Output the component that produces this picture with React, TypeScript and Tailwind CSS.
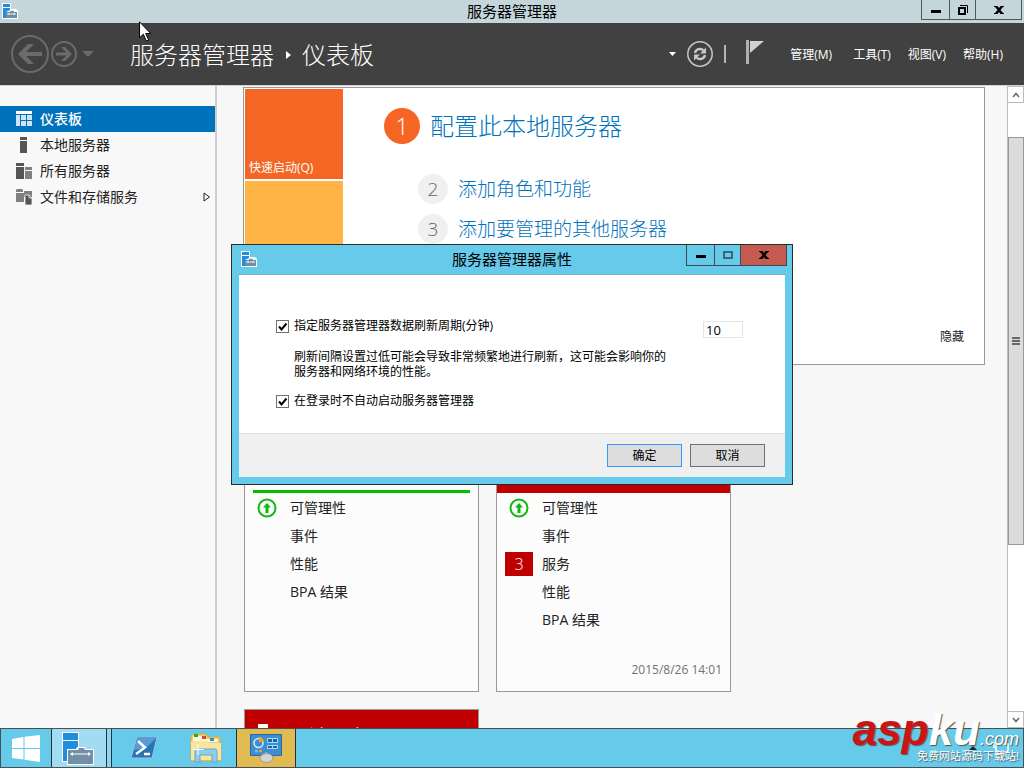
// src/App.tsx
import React, { useState } from "react";

interface NavItem {
  label: string;
  icon: React.ReactNode;
  expandable?: boolean;
}

interface TileRow {
  label: string;
  status?: "ok";
  count?: number;
}

const ServerManagerIcon: React.FC = () => (
  <svg viewBox="0 0 16 16" className="w-4 h-4">
    <path d="M0 0h9v6h5l2 2v8H0z" fill="#fff" />
    <path d="M1 1h7v3H1zM1 5h7v2L4 9v6H1z" fill="#1f8ede" />
    <path d="M4 9h3.500l1-2h3l1 2H15v6H4z" fill="#6f8ea3" />
    <path d="M7.500 9l1-1.500h3l1 1.500M5 11h9M7 10v2M12 10v2" fill="none" stroke="#fff" strokeWidth="0.8" />
  </svg>
);

const navItems: NavItem[] = [
  {
    label: "仪表板",
    icon: (
      <svg viewBox="0 0 16 16" className="w-4 h-4">
        <path d="M0 0h16v3H0z" fill="#fff" />
        <path d="M0 4h4v11H0zM5 4h5v5H5zM11 4h5v5h-5zM5 10h5v5H5zM11 10h5v5h-5z" fill="#cfe4f5" />
      </svg>
    ),
  },
  {
    label: "本地服务器",
    icon: (
      <svg viewBox="0 0 16 16" className="w-4 h-4">
        <path d="M4 0h7v3H4zM4 4h7v12H4z" fill="#555" />
      </svg>
    ),
  },
  {
    label: "所有服务器",
    icon: (
      <svg viewBox="0 0 16 16" className="w-4 h-4">
        <path d="M0 0h8v3H0zM0 4h8v12H0z" fill="#555" />
        <path d="M9 4h7v3H9zM9 8h7v8H9z" fill="#808080" />
      </svg>
    ),
  },
  {
    label: "文件和存储服务",
    expandable: true,
    icon: (
      <svg viewBox="0 0 16 16" className="w-4 h-4">
        <path d="M0 1l1-1h5l1 1v2H0zM0 4h8v9H0zM8 2h8v6H8z" fill="#808080" />
        <path d="M9 6h4l3 3v7H9z" fill="#555" stroke="#f7f7f7" strokeWidth="0.8" />
        <path d="M13 6v3h3" fill="none" stroke="#f7f7f7" strokeWidth="0.8" />
      </svg>
    ),
  },
];

const leftRows: TileRow[] = [
  { label: "可管理性", status: "ok" },
  { label: "事件" },
  { label: "性能" },
  { label: "BPA 结果" },
];

const rightRows: TileRow[] = [
  { label: "可管理性", status: "ok" },
  { label: "事件" },
  { label: "服务", count: 3 },
  { label: "性能" },
  { label: "BPA 结果" },
];

const StatusRows: React.FC<{ rows: TileRow[] }> = ({ rows }) => (
  <ul className="pt-px">
    {rows.map((row) => (
      <li key={row.label} className="flex items-center h-7 text-sm text-[#222]">
        <span className="flex items-center justify-center w-7 ml-2 mr-[9px]">
          {row.status === "ok" && (
            <svg viewBox="0 0 20 20" className="w-5 h-5">
              <circle cx="10" cy="10" r="8.500" fill="none" stroke="#0fba0f" strokeWidth="2" />
              <path d="M10 5l4 4.500h-2.500V15h-3V9.500H6z" fill="#0fba0f" />
            </svg>
          )}
          {row.count && (
            <span className="w-7 h-6 bg-[#c00000] text-white text-base leading-6 text-center font-light">
              {row.count}
            </span>
          )}
        </span>
        {row.label}
      </li>
    ))}
  </ul>
);

const CloseGlyph: React.FC = () => (
  <svg viewBox="0 0 10 8" className="w-[10px] h-2">
    <path d="M0 0h3.500L5 2 6.500 0H10v1H9L6.500 4 9 7h1v1H6.500L5 6 3.500 8H0V7h1l2.500-3L1 1H0z" fill="#000" />
  </svg>
);

const CheckOption: React.FC<{ id: string; label: string }> = ({ id, label }) => {
  const [checked, setChecked] = useState(true);
  return (
    <div className="flex items-center h-4">
      <span className="relative w-[13px] h-[13px] mr-[5px]">
        <input
          id={id}
          type="checkbox"
          checked={checked}
          onChange={(e) => setChecked(e.target.checked)}
          className="block appearance-none w-[13px] h-[13px] border border-[#707070] bg-white"
        />
        {checked && (
          <svg viewBox="0 0 13 13" className="absolute inset-0 pointer-events-none">
            <path d="M3 6.500L5.500 9.500L10.500 3.500" fill="none" stroke="#000" strokeWidth="2" />
          </svg>
        )}
      </span>
      <label htmlFor={id}>{label}</label>
    </div>
  );
};

const PropertiesDialog: React.FC = () => {
  const [interval, setRefreshInterval] = useState("10");

  return (
    <div
      role="dialog"
      aria-labelledby="dialog-title"
      className="absolute inset-x-0 top-[244px] mx-auto w-[562px] border border-[#2b2b2b] bg-[#66caea] px-[7px] pb-[7px] text-black"
    >
      <div className="relative flex items-center justify-center h-[30px] border-b border-[#7fa9b8]">
        <span className="absolute left-[2px] top-[6px]">
          <ServerManagerIcon />
        </span>
        <h2 id="dialog-title" className="text-[15px]">服务器管理器属性</h2>
        <div className="absolute right-[-2px] top-0 flex h-[21px] border border-t-0 border-[#3c4a50]">
          <button aria-label="最小化" className="flex items-center justify-center w-7 border-r border-[#3c4a50]">
            <span className="w-[10px] h-[3px] mt-[3px] bg-black" />
          </button>
          <button aria-label="最大化" className="flex items-center justify-center w-[26px] border-r border-[#3c4a50]">
            <span className="w-[10px] h-2 border-2 border-[#39697a]" />
          </button>
          <button aria-label="关闭" className="flex items-center justify-center w-[45px] bg-[#c45a50]">
            <CloseGlyph />
          </button>
        </div>
      </div>

      <div className="flex flex-col h-[158px] bg-white pl-[37px] pr-[42px] pt-[43px] text-xs">
        <div className="flex items-start justify-between">
          <CheckOption id="refresh" label="指定服务器管理器数据刷新周期(分钟)" />
          <input
            aria-label="刷新周期"
            value={interval}
            onChange={(e) => setRefreshInterval(e.target.value)}
            className="w-10 h-[17px] mt-[3px] pl-[2px] border border-[#e3e3e8] bg-white text-[13px] leading-none"
          />
        </div>
        <p className="pl-[18px] mt-[11px] leading-[15px]">
          刷新间隔设置过低可能会导致非常频繁地进行刷新，这可能会影响你的
          <br />
          服务器和网络环境的性能。
        </p>
        <div className="mt-[14px]">
          <CheckOption id="autostart" label="在登录时不自动启动服务器管理器" />
        </div>
      </div>

      <div className="flex justify-end gap-2 h-11 border-t border-[#dfdfdf] bg-[#f0f0f0] pr-5 pt-[10px] text-xs">
        <button className="w-[75px] h-[23px] border border-[#3399ff] bg-[#dddddd]">确定</button>
        <button className="w-[75px] h-[23px] border border-[#707070] bg-[#dddddd]">取消</button>
      </div>
    </div>
  );
};

const TitleBar: React.FC = () => (
  <div className="flex items-start h-[23px] bg-[#c4d6dc] text-black">
    <div className="flex-1 pl-[2px] pt-[3px]">
      <ServerManagerIcon />
    </div>
    <h1 className="text-[15px] leading-[23px]">服务器管理器</h1>
    <div className="flex flex-1 justify-end pr-[2px]">
      <div className="flex h-5 border border-t-0 border-[#4f5a5e]">
        <button aria-label="最小化" className="flex items-center justify-center w-7 border-r border-[#4f5a5e]">
          <span className="w-[10px] h-[3px] mt-[3px] bg-black" />
        </button>
        <button aria-label="还原" className="flex items-center justify-center w-[26px] border-r border-[#4f5a5e]">
          <svg viewBox="0 0 10 10" className="w-[10px] h-[10px]">
            <path d="M1 3h6v6H1z" fill="none" stroke="#000" strokeWidth="2" />
            <path d="M2 0.500h7.500V8" fill="none" stroke="#000" />
          </svg>
        </button>
        <button aria-label="关闭" className="flex items-center justify-center w-[45px]">
          <CloseGlyph />
        </button>
      </div>
    </div>
  </div>
);

const Header: React.FC = () => (
  <header className="flex items-center h-[62px] bg-[#414141] pl-[10px] pr-[21px] text-white">
    <button aria-label="后退">
      <svg viewBox="0 0 40 40" className="w-10 h-10">
        <circle cx="20" cy="20" r="18" fill="none" stroke="#6b6b6b" strokeWidth="2" />
        <path d="M8 20L18 10h6l-8 8h16v4H16l8 8h-6z" fill="#6b6b6b" />
      </svg>
    </button>
    <button aria-label="前进">
      <svg viewBox="0 0 28 28" className="w-7 h-7">
        <circle cx="14" cy="14" r="12" fill="none" stroke="#6b6b6b" strokeWidth="2" />
        <path d="M22 14l-7-7h-4l5.500 5.500H6v3h10.500L11 21h4z" fill="#6b6b6b" />
      </svg>
    </button>
    <button aria-label="历史记录" className="ml-1">
      <svg viewBox="0 0 12 6" className="w-3 h-[6px]">
        <path d="M0 0h12L6 6z" fill="#6b6b6b" />
      </svg>
    </button>
    <nav aria-label="位置" className="flex flex-1 items-center pt-[2px] ml-9 text-2xl font-light">
      <span>服务器管理器</span>
      <svg viewBox="0 0 5 8" className="w-[5px] h-2 ml-3 mr-[11px]">
        <path d="M0 0l5 4-5 4z" fill="#fff" />
      </svg>
      <span>仪表板</span>
    </nav>
    <button aria-label="更多">
      <svg viewBox="0 0 7 4" className="w-[7px] h-1">
        <path d="M0 0h7L3.500 4z" fill="#fff" />
      </svg>
    </button>
    <button aria-label="刷新" className="ml-[10px]">
      <svg viewBox="0 0 28 28" className="w-7 h-7">
        <circle cx="14" cy="14" r="12.200" fill="none" stroke="#c8c8c8" strokeWidth="1.500" />
        <path d="M9 13a5 5 0 0 1 8.500-2.500M19 15a5 5 0 0 1-8.500 2.500" fill="none" stroke="#c8c8c8" strokeWidth="2.400" />
        <path d="M20 7.500v6h-6zM8 20.500v-6h6z" fill="#c8c8c8" />
      </svg>
    </button>
    <span className="w-[2px] h-[18px] ml-[10px] mr-5 bg-[#b4b4b4]" />
    <button aria-label="通知" className="-mt-1">
      <svg viewBox="0 0 18 24" className="w-[18px] h-6">
        <path d="M0 0h3v24H0z" fill="#b0b0b0" />
        <path d="M4 1h14L4 13z" fill="#d0d0d0" />
      </svg>
    </button>
    <div className="flex gap-[17px] pt-[2px] ml-[26px] text-xs">
      <button className="mr-1">管理(M)</button>
      <button>工具(T)</button>
      <button>视图(V)</button>
      <button>帮助(H)</button>
    </div>
  </header>
);

const Sidebar: React.FC = () => (
  <nav aria-label="导航" className="w-[217px] shrink-0 border-r-2 border-[#cfcfcf] bg-[#f8f8f8] pt-5">
    {navItems.map((item, idx) => (
      <a
        key={item.label}
        href="#"
        className={`flex items-center h-[26px] pl-4 pr-1 text-sm ${
          idx === 0 ? "bg-[#0072bc] text-white font-medium" : "text-[#222]"
        }`}
      >
        {item.icon}
        <span className="flex-1 ml-2">{item.label}</span>
        {item.expandable && (
          <svg viewBox="0 0 8 10" className="w-2 h-[10px]">
            <path d="M1 1l5.500 4L1 9z" fill="none" stroke="#222" />
          </svg>
        )}
      </a>
    ))}
  </nav>
);

const WelcomePanel: React.FC = () => (
  <section className="flex h-[278px] border border-[#999] bg-white pl-px">
    <div className="flex flex-col gap-[2px] w-[98px] pt-px pb-px text-xs text-white">
      <button className="flex items-end h-[90px] bg-[#f56624] pl-1 pb-[3px]">快速启动(Q)</button>
      <div className="h-[90px] bg-[#ffb445]" />
      <div className="flex-1 bg-[#7fba42]" />
    </div>
    <div className="flex-1 pl-[41px] pt-5 font-light text-[#0072bc]">
      <a href="#" className="flex items-center h-9 text-2xl">
        <span className="w-9 h-9 mr-[10px] rounded-full bg-[#f56624] text-white leading-9 text-center">1</span>
        配置此本地服务器
      </a>
      <a href="#" className="flex items-center h-[30px] mt-[30px] ml-[34px] text-[19px]">
        <span className="w-[30px] h-[30px] mr-[10px] rounded-full bg-[#f0f0f0] text-[#666] leading-[30px] text-center">2</span>
        添加角色和功能
      </a>
      <a href="#" className="flex items-center h-[30px] mt-[10px] ml-[34px] text-[19px]">
        <span className="w-[30px] h-[30px] mr-[10px] rounded-full bg-[#f0f0f0] text-[#666] leading-[30px] text-center">3</span>
        添加要管理的其他服务器
      </a>
    </div>
    <button className="self-end pr-5 pb-[19px] text-xs text-[#222]">隐藏</button>
  </section>
);

const ScrollBar: React.FC = () => (
  <div className="flex flex-col w-[17px] shrink-0 border-l border-[#bbb] bg-white">
    <button aria-label="向上滚动" className="flex items-center justify-center h-[17px] border border-l-0 border-[#bbb]">
      <svg viewBox="0 0 8 6" className="w-2 h-[6px]">
        <path d="M1 5l3-3.500L7 5" fill="none" stroke="#666" strokeWidth="1.500" />
      </svg>
    </button>
    <div className="flex-1 pt-[34px]">
      <div className="flex flex-col items-center justify-center gap-px h-[71%] border border-[#999] bg-[#dcdcdc]">
        <span className="w-2 h-[2px] bg-[#666]" />
        <span className="w-2 h-[2px] bg-[#666]" />
        <span className="w-2 h-[2px] bg-[#666]" />
      </div>
    </div>
    <button aria-label="向下滚动" className="flex items-center justify-center h-[17px] border border-l-0 border-[#bbb]">
      <svg viewBox="0 0 8 6" className="w-2 h-[6px]">
        <path d="M1 1l3 3.500L7 1" fill="none" stroke="#666" strokeWidth="1.500" />
      </svg>
    </button>
  </div>
);

const Taskbar: React.FC = () => (
  <footer className="flex h-10 shrink-0 border border-[#4b4f52] bg-[#66caea]">
    <button aria-label="开始" className="flex items-center justify-center w-[50px]">
      <svg viewBox="0 0 28 27" className="w-7 h-[27px]">
        <path d="M0 4l11.500-2v11H0zM12.500 1.800L28 0v13H12.500zM0 14h11.500v10.500L0 23zM12.500 14H28v13l-15.500-2.300z" fill="#fff" />
      </svg>
    </button>
    <button aria-label="服务器管理器" className="flex items-center w-[56px] border-x border-[#22323a] bg-[#a1dcf2] pl-[10px]">
      <svg viewBox="0 0 32 33" className="w-8 h-[33px]">
        <path d="M0 0h17v17H5v13H0z" fill="#fff" />
        <path d="M1 1h15v7H1zM1 9h15v8H5v12H1z" fill="#1f8ede" />
        <path d="M5 17h9l1-2h8l1 2h8v16H5z" fill="#fff" />
        <path d="M6 18h10l1-2h5l1 2h8v14H6z" fill="#7290a5" />
        <path d="M9 22h19" stroke="#fff" />
        <path d="M8 22l3-2v4zM29 22l-3-2v4z" fill="#fff" />
      </svg>
    </button>
    <span className="w-[5px] border-r border-[#22323a] bg-[#8dd6f0]" />
    <button aria-label="PowerShell" className="flex items-center justify-center w-[64px]">
      <svg viewBox="0 0 28 24" className="w-7 h-6">
        <path d="M7 1h20l-5 21H1z" fill="#2b74b5" stroke="#8fc4e6" />
        <path d="M7.500 2H26L16 12 4 14z" fill="#5a9bd3" />
        <path d="M8 5l7 6.500-9 6.500M14 18h6" fill="none" stroke="#fff" strokeWidth="2.400" />
      </svg>
    </button>
    <button aria-label="文件资源管理器" className="flex items-center justify-center w-[60px]">
      <svg viewBox="0 0 32 30" className="w-8 h-[30px]">
        <path d="M1 3l2-2h13l2 3h12v6h1v18H1z" fill="#f0cc62" stroke="#d3ab49" />
        <path d="M3 3h13v3h12v3H3z" fill="#fff8dc" />
        <path d="M4 1h4v3H4z" fill="#12b52c" />
        <path d="M12 3h4v3h-4z" fill="#d9482e" />
        <path d="M20 5h4v3h-4z" fill="#2492dd" />
        <path d="M1 8h17l2 2h11v17H1z" fill="#f8e5a0" />
        <path d="M5 29V18q0-2 2-2h18q2 0 2 2v11h-5v-7H10v7z" fill="#8fcdec" stroke="#5fa9cf" />
        <path d="M8 11v11M2.500 16.500h11" stroke="#fff" />
      </svg>
    </button>
    <button aria-label="控制面板" className="flex items-center justify-center w-[60px] border-x border-[#22323a] bg-[#e1bb52]">
      <svg viewBox="0 0 32 30" className="w-8 h-[30px]">
        <path d="M0.500 1.500h31v21h-31z" fill="#3c8ed0" stroke="#2569a3" />
        <circle cx="8.500" cy="10" r="4.500" fill="none" stroke="#d6efff" strokeWidth="1.500" />
        <path d="M9 9V4a5 5 0 0 1 5 5z" fill="#f8a12e" />
        <path d="M17.500 5.500h10v4h-10zM17.500 12.500h10v3h-10z" fill="#1a66a8" stroke="#a9dcf6" />
        <path d="M22.500 5.500v4M22.500 12.500v3" stroke="#a9dcf6" />
        <circle cx="6.500" cy="18" r="1.500" fill="#59c9ff" />
        <circle cx="10.500" cy="18" r="1.500" fill="#f8a12e" />
        <path d="M16 19v5" stroke="#ddd" />
        <ellipse cx="16.500" cy="25" rx="6.500" ry="4.500" fill="#d4d4d4" stroke="#999" />
      </svg>
    </button>
    <div className="flex flex-1 items-center justify-end gap-4 pr-[14px]">
      <svg viewBox="0 0 8 4" className="w-2 h-1">
        <path d="M4 0l4 4H0z" fill="#1c2a30" />
      </svg>
      <svg viewBox="0 0 16 16" className="w-4 h-4">
        <path d="M3 4h12v8H3zM1 2v6M6 15h7" fill="none" stroke="#fff" strokeWidth="1.500" />
      </svg>
    </div>
  </footer>
);

const Watermark: React.FC = () => (
  <div className="absolute right-[5px] bottom-[6px] flex flex-col items-end font-['Liberation_Sans','Noto_Sans_CJK_SC',sans-serif] text-white pointer-events-none">
    <div className="flex items-baseline h-10 italic leading-10 [text-shadow:1px_1px_1px_#555]">
      <span className="text-[44px] font-bold text-[#cc1414]">asp</span>
      <span className="text-[44px] font-bold">ku</span>
      <span className="text-lg leading-4">.com</span>
    </div>
    <span className="text-[11px] leading-3 [text-shadow:1px_1px_1px_#555]">免费网站源码下载站!</span>
  </div>
);

const App: React.FC = () => {
  return (
    <div className="relative flex flex-col h-screen overflow-hidden bg-[#f7f7f7] font-['Open_Sans','Noto_Sans_CJK_SC',sans-serif]">
      <TitleBar />
      <Header />

      <div className="flex flex-1 min-h-0 border-t border-[#d8d0d4]">
        <Sidebar />
        <main className="flex-1 min-w-0 overflow-hidden pl-[26px] pr-[22px] pt-px">
          <WelcomePanel />

          {/* Role and server group tiles */}
          <div className="grid grid-cols-[235px_235px] gap-[17px] mt-20 ml-px">
            <section className="h-[247px] border border-[#999] bg-[#fcfcfc]">
              <div className="h-[47px] mx-2 border-b-[3px] border-[#00c000]" />
              <StatusRows rows={leftRows} />
            </section>
            <section className="flex flex-col h-[247px] border border-[#999] bg-[#fcfcfc]">
              <div className="h-[47px] bg-[#c00000]" />
              <StatusRows rows={rightRows} />
              <time className="mt-auto pr-2 pb-[13px] text-right text-xs text-[#707070]">2015/8/26 14:01</time>
            </section>
            <section className="h-[247px] border border-[#999] bg-[#fcfcfc]">
              <div className="flex items-start h-[47px] bg-[#c00000] pl-[13px] pt-[14px] text-white">
                <svg viewBox="0 0 10 20" className="w-[10px] h-5">
                  <path d="M0 0h10v4H0zM0 6h10v14H0z" fill="#fff" />
                </svg>
                <span className="ml-7 text-lg leading-6">所有服务器</span>
              </div>
            </section>
          </div>
        </main>
        <ScrollBar />
      </div>

      <Taskbar />
      <PropertiesDialog />
      <Watermark />

      {/* Mouse pointer */}
      <svg viewBox="0 0 12 21" className="absolute left-[139px] top-[21px] w-3 h-[21px] pointer-events-none">
        <path d="M0.500 0.800v16l3.800-3.600 3 6.800 2.400-1-3-6.500h5z" fill="#fff" stroke="#000" />
      </svg>
    </div>
  );
};

export default App;
